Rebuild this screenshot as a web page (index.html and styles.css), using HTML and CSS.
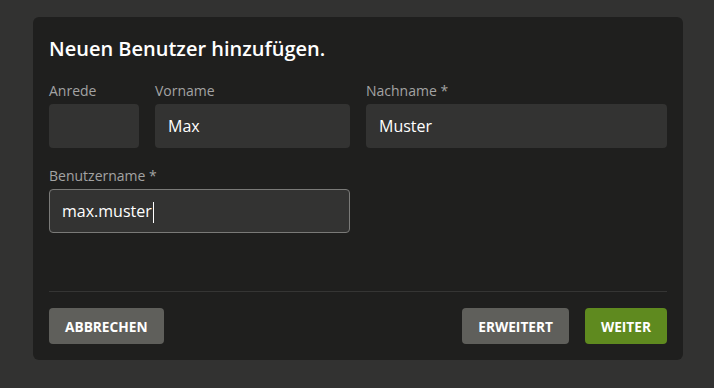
FILE: index.html
```html
<!DOCTYPE html>
<html lang="de">
<head>
    <meta charset="UTF-8">
    <meta name="viewport" content="width=device-width, initial-scale=1.0">
    <title>Neuen Benutzer hinzufügen</title>
    <link rel="stylesheet" href="styles.css">
</head>
<body>
    <div class="modal">
        <h2 class="modal-title">Neuen Benutzer hinzufügen.</h2>

        <div class="form-grid">
            <div class="field">
                <label>Anrede</label>
                <div class="input"></div>
            </div>
            <div class="field">
                <label>Vorname</label>
                <div class="input">Max</div>
            </div>
            <div class="field">
                <label>Nachname *</label>
                <div class="input">Muster</div>
            </div>
            <div class="field field-wide">
                <label>Benutzername *</label>
                <div class="input input-focus">max.muster<span class="caret"></span></div>
            </div>
        </div>

        <div class="modal-footer">
            <button class="btn">Abbrechen</button>
            <div class="footer-right">
                <button class="btn">Erweitert</button>
                <button class="btn btn-primary">Weiter</button>
            </div>
        </div>
    </div>
</body>
</html>
```

FILE: styles.css
```css
* {
    margin: 0;
    padding: 0;
    box-sizing: border-box;
}

body {
    background-color: #323231;
    font-family: "Open Sans", "Liberation Sans", Arial, sans-serif;
    padding: 17px 31px 0 33px;
    height: 388px;
    overflow: hidden;
}

.modal {
    background: #1f1f1e;
    border-radius: 6px;
    padding: 20px 16px 16px;
    width: 650px;
}

.modal-title {
    color: #ffffff;
    font-size: 20px;
    font-weight: 600;
    line-height: 24px;
    margin-bottom: 20px;
}

.form-grid {
    display: grid;
    grid-template-columns: 90px 195px 301px;
    column-gap: 16px;
    row-gap: 18px;
}

.field-wide {
    grid-column: 1 / 3;
}

label {
    display: block;
    color: #a3a3a3;
    font-size: 14px;
    line-height: 19px;
    margin-bottom: 4px;
}

.input {
    height: 44px;
    background: #333332;
    border-radius: 4px;
    color: #ffffff;
    font-size: 16px;
    line-height: 44px;
    padding: 0 13px;
}

.input-focus {
    border: 1px solid #7a7a78;
    line-height: 42px;
    padding: 0 12px;
}

.caret {
    display: inline-block;
    width: 1px;
    height: 21px;
    background: #ffffff;
    vertical-align: middle;
    margin-left: 1px;
}

.modal-footer {
    display: flex;
    justify-content: space-between;
    align-items: center;
    margin-top: 58px;
    padding-top: 16px;
    border-top: 1px solid #353534;
}

.footer-right {
    display: flex;
    gap: 16px;
}

.btn {
    background-color: #5f5f5b;
    color: #ffffff;
    border: none;
    border-radius: 4px;
    height: 36px;
    padding: 0 16px;
    font-family: inherit;
    font-size: 13.7px;
    font-weight: 700;
    text-transform: uppercase;
    cursor: pointer;
}

.btn-primary {
    background-color: #5f8a1f;
}
```
